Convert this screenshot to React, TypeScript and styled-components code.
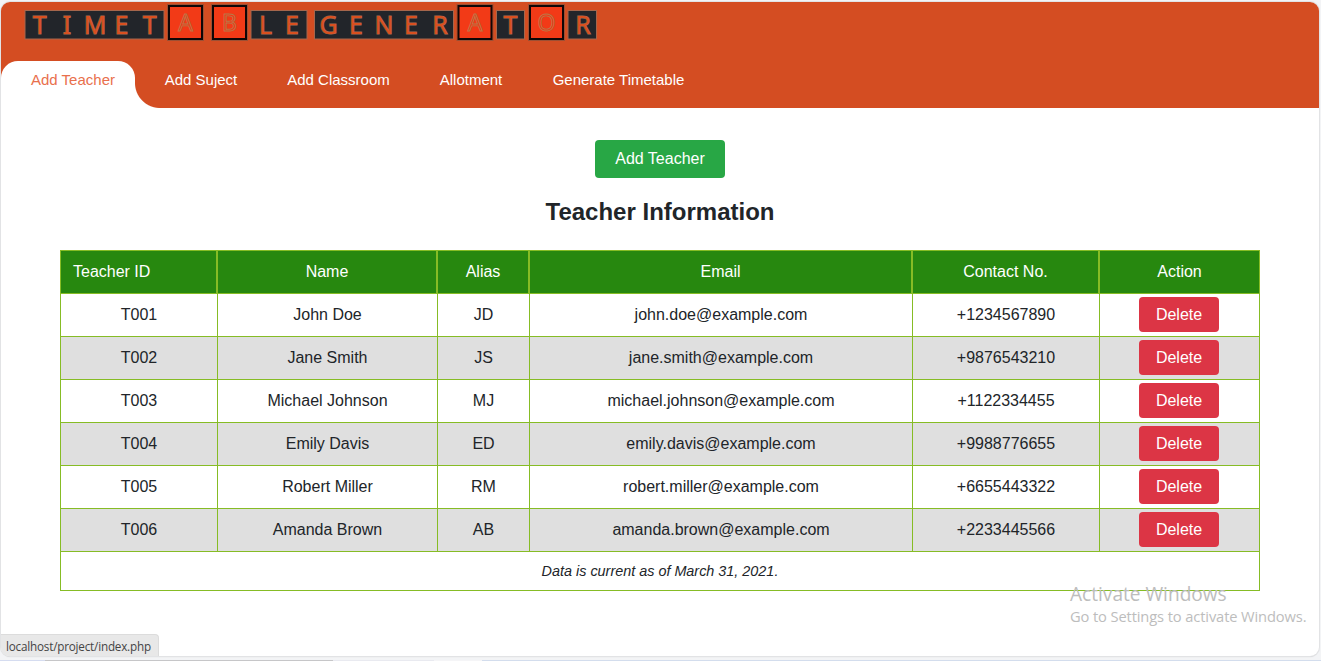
import React from "react";
import styled, { createGlobalStyle, css } from "styled-components";

const GlobalStyle = createGlobalStyle`
  * { box-sizing: border-box; }
  html, body { margin: 0; }
  body {
    background: #f3f4f6;
    color: #212529;
    font-family: "Liberation Sans", Arial, sans-serif;
    font-size: 16px;
    overflow: hidden;
  }
`;

const Screen = styled.div`
  height: 661px;
  padding: 2px 1px 0;
  position: relative;
  display: flex;
  flex-direction: column;
`;

const Window = styled.div`
  height: 654px;
  width: 1318px;
  background: #fff;
  border-radius: 9px;
  overflow: hidden;
  box-shadow: 0 0 0 1px #e2e3e5, 0 1px 1px #c8c8ca;
`;

const DesktopEdge = styled.div`
  margin: 4px -1px 0;
  height: 1px;
  background: linear-gradient(90deg, #d5dcf0 0 45px, #c6c6c8 45px 333px, #e9eaf0 333px 434px, #f5f5f7 434px 482px, #d3dded 482px);
`;

const Header = styled.header`
  height: 106px;
  background: #d44d22;
  display: flex;
  flex-direction: column;
  justify-content: space-between;
`;

const Logo = styled.svg`
  display: block;
  margin-left: 19px;
  width: 580px;
  height: 44px;
`;

const Nav = styled.nav`
  display: flex;
  height: 47px;
`;

const Tab = styled.a<{ $width: number; $active?: boolean }>`
  width: ${(p) => p.$width}px;
  height: 47px;
  padding-top: 10px;
  line-height: 17px;
  font-size: 15px;
  text-align: center;
  color: #fff;
  ${(p) =>
    p.$active &&
    css`
      position: relative;
      padding-left: 10px;
      color: #e9704c;
      background: #fff;
      border-radius: 17px 17px 0 0;
      &::after {
        content: "";
        position: absolute;
        left: 100%;
        bottom: 0;
        width: 25px;
        height: 25px;
        background: radial-gradient(circle at 100% 0, transparent 24.5px, #fff 25.5px);
      }
    `}
`;

const Main = styled.main`
  display: flex;
  flex-direction: column;
  align-items: center;
  padding-top: 32px;
`;

const Button = styled.button<{ $kind: "add" | "delete" }>`
  display: block;
  border: 0;
  border-radius: 4px;
  padding: 0;
  margin: 0 auto;
  color: #fff;
  font: 16px "Liberation Sans", Arial, sans-serif;
  ${(p) =>
    p.$kind === "add"
      ? css`
          width: 130px;
          height: 38px;
          background: #28a745;
        `
      : css`
          width: 80px;
          height: 35px;
          padding-top: 1px;
          background: #dc3545;
        `}
`;

const Title = styled.h2`
  margin: 20px 0 24px;
  font-size: 24px;
  line-height: 28px;
`;

const Table = styled.table`
  width: 1200px;
  table-layout: fixed;
  border-collapse: separate;
  border-spacing: 0;
  border-right: 1px solid #86bc25;
  border-bottom: 1px solid #86bc25;
`;

const Col = styled.col<{ $width: number }>`
  width: ${(p) => p.$width}px;
`;

const HeadCell = styled.th`
  height: 43px;
  padding: 0 12px;
  border: 0 solid #86bc25;
  border-width: 1px 1px 0;
  background: #27880f;
  color: #fff;
  font-weight: 400;
  text-align: center;
  &:first-child { text-align: left; }
  &:last-child { border-right-width: 0; }
`;

const Row = styled.tr`
  background: #fff;
  &:nth-child(even) { background: #dfdfdf; }
`;

const Cell = styled.td`
  height: 43px;
  padding: 0;
  border: 0 solid #86bc25;
  border-width: 1px 0 0 1px;
  text-align: center;
`;

const ActionCell = styled(Cell)`
  padding: 0 1px 1px 0;
`;

const Note = styled(Cell)`
  height: 39px;
  font-size: 14.4px;
  font-style: italic;
`;

const StatusBar = styled.div`
  position: absolute;
  left: 1px;
  top: 634px;
  width: 158px;
  height: 22px;
  padding-left: 5px;
  border: 1px solid #dcdcdc;
  border-width: 1px 1px 0 0;
  border-radius: 0 4px 0 8px;
  background: #e8e8e8;
  color: #444;
  font: 11.7px/22px "Open Sans", sans-serif;
  letter-spacing: -0.2px;
  white-space: nowrap;
`;

const Watermark = styled.div`
  position: absolute;
  left: 1070px;
  top: 583px;
  color: #bdbdbd;
  font-family: "Open Sans", sans-serif;
  white-space: nowrap;
`;

const WatermarkTitle = styled.div`
  font-size: 19.1px;
  line-height: 23px;
`;

const WatermarkText = styled.div`
  font-size: 14.7px;
  letter-spacing: -0.12px;
  line-height: 21px;
`;

const darkPanels = [
  [25, 139], [251, 56], [314.5, 139], [496.5, 28], [568, 28.5],
];
const redPanels = [168, 212, 457.5, 529];
const darkLetters: [string, number][] = [
  ["T", 39.7], ["I", 67], ["M", 95], ["E", 121.5], ["T", 149.7],
  ["L", 265.5], ["E", 292],
  ["G", 328.5], ["E", 356], ["N", 384], ["E", 411], ["R", 440],
  ["T", 510.5], ["R", 583],
];
const redLetters: [string, number][] = [
  ["A", 185.5], ["B", 229.5], ["A", 475], ["O", 546.5],
];

const TimetableLogo = () => (
  <Logo viewBox="20 2 580 44" role="img" aria-label="Timetable Generator">
    {darkPanels.map(([x, w]) => (
      <rect key={x} x={x} y={10.5} width={w} height={28.5} fill="#22252a" stroke="#a5664c" strokeWidth={1} />
    ))}
    {redPanels.map((x) => (
      <g key={x}>
        <rect x={x - 0.5} y={4.5} width={36} height={36} fill="none" stroke="#9c5034" />
        <rect x={x + 1} y={6} width={33} height={33} fill="#f23a17" stroke="#100606" strokeWidth={2} />
      </g>
    ))}
    <g fontFamily="Noto Sans, sans-serif" fontSize={25} textAnchor="middle">
      {darkLetters.map(([c, x]) => (
        <text key={x} x={x} y={34} fill="#d9501f" stroke="#a06a52" strokeWidth={1} paintOrder="stroke">{c}</text>
      ))}
      {redLetters.map(([c, x]) => (
        <text key={x} x={x} y={31} fontSize={23} fill="#f23a17" stroke="#b97848" strokeWidth={0.9}>{c}</text>
      ))}
    </g>
  </Logo>
);

const tabs = [
  { label: "Add Teacher", width: 134, active: true },
  { label: "Add Suject", width: 132 },
  { label: "Add Classroom", width: 143 },
  { label: "Allotment", width: 122 },
  { label: "Generate Timetable", width: 173 },
];

const columns = [
  { label: "Teacher ID", width: 157 },
  { label: "Name", width: 220 },
  { label: "Alias", width: 92 },
  { label: "Email", width: 383 },
  { label: "Contact No.", width: 187 },
  { label: "Action", width: 160 },
];

const teachers = [
  ["T001", "John Doe", "JD", "john.doe@example.com", "+1234567890"],
  ["T002", "Jane Smith", "JS", "jane.smith@example.com", "+9876543210"],
  ["T003", "Michael Johnson", "MJ", "michael.johnson@example.com", "+1122334455"],
  ["T004", "Emily Davis", "ED", "emily.davis@example.com", "+9988776655"],
  ["T005", "Robert Miller", "RM", "robert.miller@example.com", "+6655443322"],
  ["T006", "Amanda Brown", "AB", "amanda.brown@example.com", "+2233445566"],
];

export default function App() {
  return (
    <Screen>
      <GlobalStyle />
      <Window>
        <Header>
          <TimetableLogo />
          <Nav>
            {tabs.map((t) => (
              <Tab key={t.label} $width={t.width} $active={t.active}>{t.label}</Tab>
            ))}
          </Nav>
        </Header>
        <Main>
          <Button $kind="add">Add Teacher</Button>
          <Title>Teacher Information</Title>
          <Table>
            <colgroup>
              {columns.map((c) => <Col key={c.label} $width={c.width} />)}
            </colgroup>
            <thead>
              <tr>{columns.map((c) => <HeadCell key={c.label}>{c.label}</HeadCell>)}</tr>
            </thead>
            <tbody>
              {teachers.map((t) => (
                <Row key={t[0]}>
                  {t.map((v) => <Cell key={v}>{v}</Cell>)}
                  <ActionCell><Button $kind="delete">Delete</Button></ActionCell>
                </Row>
              ))}
            </tbody>
            <tfoot>
              <tr><Note colSpan={6}>Data is current as of March 31, 2021.</Note></tr>
            </tfoot>
          </Table>
        </Main>
      </Window>
      <DesktopEdge />
      <StatusBar>localhost/project/index.php</StatusBar>
      <Watermark>
        <WatermarkTitle>Activate Windows</WatermarkTitle>
        <WatermarkText>Go to Settings to activate Windows.</WatermarkText>
      </Watermark>
    </Screen>
  );
}
